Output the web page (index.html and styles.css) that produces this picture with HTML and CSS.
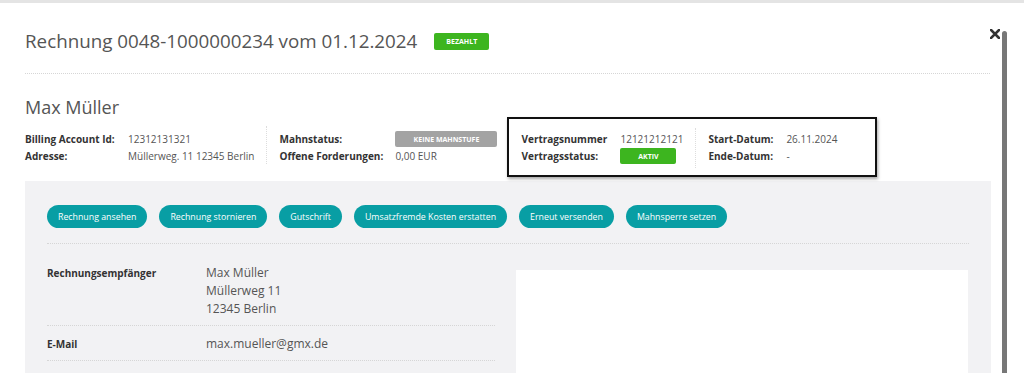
FILE: index.html
```html
<!DOCTYPE html>
<html lang="de">
<head>
    <meta charset="UTF-8">
    <meta name="viewport" content="width=device-width, initial-scale=1.0">
    <title>Rechnung</title>
    <link rel="stylesheet" href="styles.css">
</head>
<body>
    <div class="topbar"></div>
    <main class="modal">
        <button class="close">
            <svg width="10" height="10" viewBox="0 0 10 10"><path d="M1 1L9 9M9 1L1 9" stroke="#333" stroke-width="2.6" stroke-linecap="square"/></svg>
        </button>
        <div class="scrollbar"></div>
        <header class="modal-header">
            <h1>Rechnung 0048-1000000234 vom 01.12.2024</h1>
            <span class="badge badge--green badge--bezahlt">BEZAHLT</span>
        </header>
        <section class="kunde">
            <h2>Max Müller</h2>
            <div class="infos">
                <div class="info-group">
                    <div class="info-row"><span class="label w103">Billing Account Id:</span><span>12312131321</span></div>
                    <div class="info-row"><span class="label w103">Adresse:</span><span>Müllerweg. 11 12345 Berlin</span></div>
                </div>
                <div class="info-group divider">
                    <div class="info-row"><span class="label w116">Mahnstatus:</span><span class="badge badge--gray">KEINE MAHNSTUFE</span></div>
                    <div class="info-row"><span class="label w116">Offene Forderungen:</span><span>0,00 EUR</span></div>
                </div>
                <div class="vertrag">
                    <div class="info-group">
                        <div class="info-row"><span class="label w99">Vertragsnummer</span><span>12121212121</span></div>
                        <div class="info-row"><span class="label w99">Vertragsstatus:</span><span class="badge badge--green badge--aktiv">AKTIV</span></div>
                    </div>
                    <div class="info-group divider">
                        <div class="info-row"><span class="label w78">Start-Datum:</span><span>26.11.2024</span></div>
                        <div class="info-row"><span class="label w78">Ende-Datum:</span><span>-</span></div>
                    </div>
                </div>
            </div>
        </section>
        <section class="panel">
            <div class="aktionen">
                <button class="btn">Rechnung ansehen</button>
                <button class="btn">Rechnung stornieren</button>
                <button class="btn">Gutschrift</button>
                <button class="btn">Umsatzfremde Kosten erstatten</button>
                <button class="btn">Erneut versenden</button>
                <button class="btn">Mahnsperre setzen</button>
            </div>
            <div class="details">
                <div class="empfaenger">
                    <div class="detail-row">
                        <span class="detail-label">Rechnungsempfänger</span>
                        <div class="detail-value">Max Müller<br>Müllerweg 11<br>12345 Berlin</div>
                    </div>
                    <div class="detail-row">
                        <span class="detail-label">E-Mail</span>
                        <div class="detail-value">max.mueller@gmx.de</div>
                    </div>
                </div>
                <div class="vorschau"></div>
            </div>
        </section>
    </main>
</body>
</html>
```

FILE: styles.css
```css
* {
    box-sizing: border-box;
    font-family: 'Open Sans', 'Liberation Sans', sans-serif;
}
html, body {
    margin: 0;
    height: 100%;
    overflow: hidden;
    background: #fff;
    color: #555;
}
.topbar {
    height: 3px;
    background: #e4e4e4;
}
.modal {
    position: relative;
    padding: 0 34px 0 25px;
}
.close {
    position: absolute;
    top: 26px;
    left: 990px;
    border: none;
    background: none;
    padding: 0;
    line-height: 0;
}
.scrollbar {
    position: absolute;
    top: 28px;
    left: 1002px;
    width: 5px;
    height: 400px;
    border-radius: 3px 3px 0 0;
    background: #777;
}
.modal-header {
    display: flex;
    align-items: center;
    gap: 17px;
    height: 71px;
    padding-top: 6px;
    border-bottom: 1px dotted #d6d6d6;
}
h1 {
    margin: 0;
    font-size: 18.8px;
    font-weight: 400;
    color: #555;
}
.badge {
    display: inline-flex;
    justify-content: center;
    align-items: center;
    height: 16px;
    padding: 0 9px;
    border-radius: 2px;
    color: #fff;
    font-size: 7px;
    font-weight: 700;
}
.badge--green {
    background: #3db51f;
}
.badge--bezahlt {
    width: 55px;
    height: 17px;
}
.badge--gray {
    background: #a3a3a3;
    width: 102px;
}
.badge--aktiv {
    width: 56px;
}
.kunde h2 {
    margin: 21px 0 7px;
    font-size: 18px;
    font-weight: 400;
    color: #555;
}
.infos {
    display: flex;
    align-items: flex-start;
}
.info-group {
    display: flex;
    flex-direction: column;
    gap: 1px;
    padding-top: 5px;
    font-size: 10px;
}
.info-group.divider {
    border-left: 1px dotted #ddd;
    padding-left: 12px;
    margin-left: 12px;
    height: 38px;
}
.info-row {
    display: flex;
    align-items: center;
    height: 16px;
    white-space: nowrap;
}
.label {
    font-weight: 700;
    color: #333;
}
.w103 { width: 103px; }
.w116 { width: 116px; }
.w99 { width: 99px; }
.w78 { width: 78px; }
.vertrag {
    display: flex;
    margin: -9px 0 0 10px;
    width: 370px;
    height: 60px;
    padding: 9px 0 0 12px;
    border: 2px solid #111;
    box-shadow: 1px 2px 3px rgba(0, 0, 0, 0.35);
}
.vertrag .info-group {
    padding-top: 3px;
}
.vertrag .info-group.divider {
    height: 40px;
}
.panel {
    margin-top: 4px;
    width: 966px;
    height: 200px;
    background: #f2f2f4;
    padding: 24px 22px 0;
}
.aktionen {
    display: flex;
    gap: 12px;
    padding-bottom: 15px;
    border-bottom: 1px dotted #d6d6d6;
}
.btn {
    height: 23px;
    padding: 0 11px;
    border: none;
    border-radius: 12px;
    background: #089ea4;
    color: #fff;
    font-size: 8.8px;
}
.details {
    display: flex;
    gap: 21px;
    padding-top: 15px;
}
.empfaenger {
    width: 448px;
}
.detail-row {
    display: flex;
    padding: 5px 0 7px;
    border-bottom: 1px dotted #d6d6d6;
    font-size: 12px;
    line-height: 18px;
}
.detail-row + .detail-row {
    padding-top: 9px;
}
.detail-label {
    width: 159px;
    font-size: 10px;
    font-weight: 700;
    color: #333;
}
.detail-value {
    color: #555;
}
.vorschau {
    margin-top: 11px;
    width: 452px;
    height: 120px;
    background: #fff;
}
```
